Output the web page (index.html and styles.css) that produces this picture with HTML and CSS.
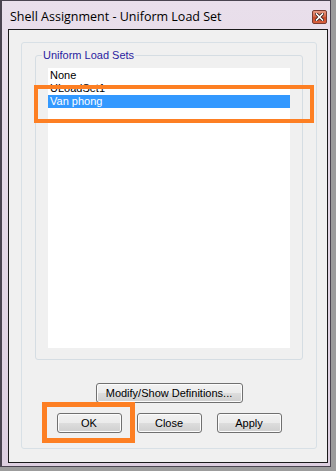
FILE: index.html
```html
<!DOCTYPE html>
<html>
<head>
<meta charset="utf-8">
<link rel="stylesheet" href="styles.css">
</head>
<body>
<div class="window">
  <div class="titlebar">
    <span class="title">Shell Assignment - Uniform Load Set</span>
    <span class="close-btn">
      <svg width="9" height="8" viewBox="0 0 9 8"><path d="M1.5 1 L7.5 7 M7.5 1 L1.5 7" stroke="#3a2020" stroke-width="3.2" stroke-linecap="square"/><path d="M1.5 1 L7.5 7 M7.5 1 L1.5 7" stroke="#ffffff" stroke-width="1.6" stroke-linecap="square"/></svg>
    </span>
  </div>
  <div class="client">
    <div class="panel">
      <fieldset class="group">
        <legend>Uniform Load Sets</legend>
        <div class="group-body">
          <div class="listbox">
            <div class="item">None</div>
            <div class="item">ULoadSet1</div>
            <div class="item selected">Van phong</div>
          </div>
        </div>
      </fieldset>
      <div class="buttons">
        <button class="btn btn-wide">Modify/Show Definitions...</button>
        <div class="btn-row">
          <button class="btn">OK</button>
          <button class="btn">Close</button>
          <button class="btn">Apply</button>
        </div>
      </div>
    </div>
  </div>
  <div class="mark mark-list"></div>
  <div class="mark mark-ok"></div>
</div>
</body>
</html>
```
FILE: styles.css
```css
html, body {
  margin: 0;
  padding: 0;
}
body {
  background: #9c9c9c;
  width: 336px;
  height: 471px;
  overflow: hidden;
  font-family: "Liberation Sans", Arial, sans-serif;
}
.window {
  position: relative;
  width: 331px;
  height: 467px;
  box-sizing: border-box;
  background: linear-gradient(to bottom, #e9dfeb, #ddcfe0);
  border: 1px solid #4a4450;
  border-left-width: 2px;
  padding: 0 2px 3px 6px;
  display: flex;
  flex-direction: column;
}
.titlebar {
  height: 28px;
  display: flex;
  align-items: center;
  justify-content: space-between;
  padding: 0 1px 0 2px;
}
.title {
  font-family: "Open Sans", "Noto Sans", sans-serif;
  font-size: 12.5px;
  color: #000;
  margin-top: 2px;
}
.close-btn {
  width: 15px;
  height: 14px;
  box-sizing: border-box;
  border: 1px solid #7a3a30;
  border-radius: 2px;
  background: linear-gradient(to bottom, #e89a84 0%, #d86a4c 45%, #c84a2c 55%, #d8603c 100%);
  display: flex;
  align-items: center;
  justify-content: center;
  margin-top: 4px;
}
.close-btn svg {
  display: block;
}
.client {
  flex: 1;
  background: #f0f0f0;
  border: 1px solid #1a1a1a;
  padding: 12px 10px 13px 12px;
  display: flex;
}
.panel {
  flex: 1;
  border: 1px solid #d8e0e6;
  border-radius: 3px;
  padding: 6px 13px 0 13px;
  display: flex;
  flex-direction: column;
}
.group {
  margin: 0;
  border: 1px solid #d5dde3;
  border-radius: 3px;
  padding: 0;
  min-width: 0;
}
.group legend {
  font-size: 11px;
  color: #2a1ca0;
  padding: 0 1px;
  margin-left: 6px;
  line-height: 12px;
}
.group-body {
  padding: 7px 12px 11px 12px;
}
.listbox {
  height: 280px;
  background: #ffffff;
  padding-top: 1px;
  box-sizing: border-box;
  font-size: 11px;
}
.item {
  height: 13px;
  line-height: 13px;
  padding-left: 2px;
  color: #000;
}
.item.selected {
  background: #3399ff;
  color: #fff;
}
.buttons {
  display: flex;
  flex-direction: column;
  align-items: center;
  margin-top: 23px;
  gap: 10px;
}
.btn-row {
  display: flex;
  gap: 15px;
}
.btn {
  width: 65px;
  height: 20px;
  box-sizing: border-box;
  border: 1px solid #707070;
  border-radius: 3px;
  background: linear-gradient(to bottom, #f2f2f2 0%, #ebebeb 50%, #dddddd 51%, #cfcfcf 100%);
  box-shadow: inset 0 0 0 1px #fcfcfc;
  font-family: "Liberation Sans", Arial, sans-serif;
  font-size: 11px;
  color: #000;
  padding: 0;
  margin: 0;
}
.btn-wide {
  width: 147px;
}
.mark {
  position: absolute;
  border: 4px solid #fd7f23;
  box-sizing: border-box;
}
.mark-list {
  left: 32px;
  top: 84px;
  width: 280px;
  height: 38px;
}
.mark-ok {
  left: 40px;
  top: 401px;
  width: 93px;
  height: 41px;
  border-width: 5px;
}
```
